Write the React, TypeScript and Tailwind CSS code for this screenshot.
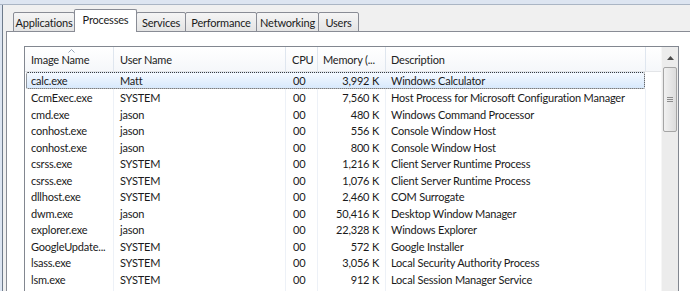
import React from "react";

type Row = [string, string, string, string, string];

const rows: Row[] = [
  ["calc.exe", "Matt", "00", "3,992 K", "Windows Calculator"],
  ["CcmExec.exe", "SYSTEM", "00", "7,560 K", "Host Process for Microsoft Configuration Manager"],
  ["cmd.exe", "jason", "00", "480 K", "Windows Command Processor"],
  ["conhost.exe", "jason", "00", "556 K", "Console Window Host"],
  ["conhost.exe", "jason", "00", "800 K", "Console Window Host"],
  ["csrss.exe", "SYSTEM", "00", "1,216 K", "Client Server Runtime Process"],
  ["csrss.exe", "SYSTEM", "00", "1,076 K", "Client Server Runtime Process"],
  ["dllhost.exe", "SYSTEM", "00", "2,460 K", "COM Surrogate"],
  ["dwm.exe", "jason", "00", "50,416 K", "Desktop Window Manager"],
  ["explorer.exe", "jason", "00", "22,328 K", "Windows Explorer"],
  ["GoogleUpdate...", "SYSTEM", "00", "572 K", "Google Installer"],
  ["lsass.exe", "SYSTEM", "00", "3,056 K", "Local Security Authority Process"],
  ["lsm.exe", "SYSTEM", "00", "912 K", "Local Session Manager Service"],
];

const tabs = [
  { label: "Applications", w: "w-[62px]" },
  { label: "Processes", w: "w-[63px]", active: true },
  { label: "Services", w: "w-[50px]" },
  { label: "Performance", w: "w-[72px]" },
  { label: "Networking", w: "w-[63px]" },
  { label: "Users", w: "w-[41px]" },
];

function SortArrow() {
  return (
    <svg width="7" height="4" viewBox="0 0 7 4" className="absolute left-[43px] top-[2px]">
      <path d="M0.5 3.5 L3.5 0.5 L6.5 3.5" fill="none" stroke="#97a5b8" strokeWidth="1" />
    </svg>
  );
}

function Cells({ r }: { r: Row }) {
  return (
    <>
      <div className="w-[89px] shrink-0 pl-[6px] border-r border-[#edf1f7] whitespace-nowrap">{r[0]}</div>
      <div className="w-[172px] shrink-0 pl-[6px] border-r border-[#edf1f7]">{r[1]}</div>
      <div className="w-[32px] shrink-0 pl-[7px] border-r border-[#edf1f7]">{r[2]}</div>
      <div className="w-[68px] shrink-0 pr-[6px] text-right border-r border-[#edf1f7]">{r[3]}</div>
      <div className="w-[260px] shrink-0 pl-[5px] border-r border-[#edf1f7] whitespace-nowrap">{r[4]}</div>
    </>
  );
}

export default function App() {
  return (
    <div
      className="w-[690px] h-[291px] overflow-hidden bg-[#f0f0f0] flex flex-col text-[11px] tracking-[-0.2px] text-[#1a1a1a]"
      style={{ fontFamily: "Lato, 'Liberation Sans', sans-serif" }}
    >
      <div className="h-[5px] shrink-0 bg-[#dde5f1] border-b border-[#aab5c4]" />

      <div className="flex-1 flex min-h-0">
        <div className="w-[3px] shrink-0 bg-[#dde5f1] border-r border-[#6e7b8b]" />
        <div className="flex-1 flex flex-col min-w-0 pl-[3px]">
          {/* tab strip */}
          <div className="h-[27px] shrink-0 flex items-end pl-[7px] relative z-10 -mb-px">
            {tabs.map((t, i) =>
              t.active ? (
                <div
                  key={t.label}
                  className={`${t.w} h-[23px] -ml-px bg-white border border-b-0 border-[#898c95] rounded-t-[2px] flex justify-center pt-[3px] leading-[14px]`}
                >
                  {t.label}
                </div>
              ) : (
                <div
                  key={t.label}
                  className={`${t.w} h-[20px] ${i > 0 ? "-ml-px" : ""} bg-gradient-to-b from-[#f5f5f5] to-[#e4e4e4] border border-[#898c95] rounded-t-[2px] flex justify-center pt-[3px] leading-[14px]`}
                >
                  {t.label}
                </div>
              )
            )}
          </div>

          {/* tab page */}
          <div className="flex-1 bg-white border-t border-l border-[#898c95] pl-[17px] pt-[14px] min-h-0">
            <div className="w-[655px] h-[260px] border border-[#828790] flex bg-white">
              <div className="w-[636px] shrink-0 flex flex-col">
                {/* header */}
                <div className="h-[25px] shrink-0 flex bg-gradient-to-b from-white to-[#f5f7fa] border-b border-[#e3e5e8] text-[#222] leading-[25px] relative">
                  <SortArrow />
                  <div className="w-[89px] shrink-0 pl-[6px] border-r border-[#dfe6ef]">Image Name</div>
                  <div className="w-[172px] shrink-0 pl-[6px] border-r border-[#dfe6ef]">User Name</div>
                  <div className="w-[32px] shrink-0 pl-[6px] border-r border-[#dfe6ef]">CPU</div>
                  <div className="w-[68px] shrink-0 pl-[5px] border-r border-[#dfe6ef] whitespace-nowrap">Memory (...</div>
                  <div className="w-[260px] shrink-0 pl-[5px] border-r border-[#dfe6ef]">Description</div>
                  <div className="w-[15px] shrink-0" />
                </div>

                {/* rows */}
                <div className="flex flex-col">
                  {rows.map((r, i) =>
                    i === 0 ? (
                      <div key={i} className="h-[17px] flex leading-[17px] relative">
                        <div className="absolute left-px top-0 w-[619px] h-[17px] rounded-[2px] border border-dotted border-[#3c3c3c] bg-gradient-to-b from-[#f4f9ff] to-[#d8e9fc]" />
                        <div className="relative flex [&>div]:border-transparent">
                          <Cells r={r} />
                        </div>
                      </div>
                    ) : (
                      <div key={i} className="h-[16.5px] flex leading-[17px]">
                        <Cells r={r} />
                      </div>
                    )
                  )}
                  <div className="h-[20px] flex">
                    <Cells r={["", "", "", "", ""]} />
                  </div>
                </div>
              </div>

              {/* scrollbar */}
              <div className="w-[17px] shrink-0 flex flex-col bg-[#ececec] border-l border-[#f6f6f6]">
                <div className="h-[20px] shrink-0 flex items-center justify-center pt-[1px]">
                  <svg width="7" height="4" viewBox="0 0 7 4">
                    <path d="M0 4 L3.5 0 L7 4 Z" fill="#4a4a4a" />
                  </svg>
                </div>
                <div className="mx-[1px] h-[65px] rounded-[2px] border border-[#a5a5a5] bg-gradient-to-r from-[#f1f1f1] to-[#dcdcdc] flex flex-col items-center justify-center gap-[1px]">
                  <div className="w-[6px] h-px bg-[#8c8c8c]" />
                  <div className="w-[6px] h-px bg-[#8c8c8c]" />
                  <div className="w-[6px] h-px bg-[#8c8c8c]" />
                </div>
              </div>
            </div>
          </div>
        </div>
      </div>
    </div>
  );
}
